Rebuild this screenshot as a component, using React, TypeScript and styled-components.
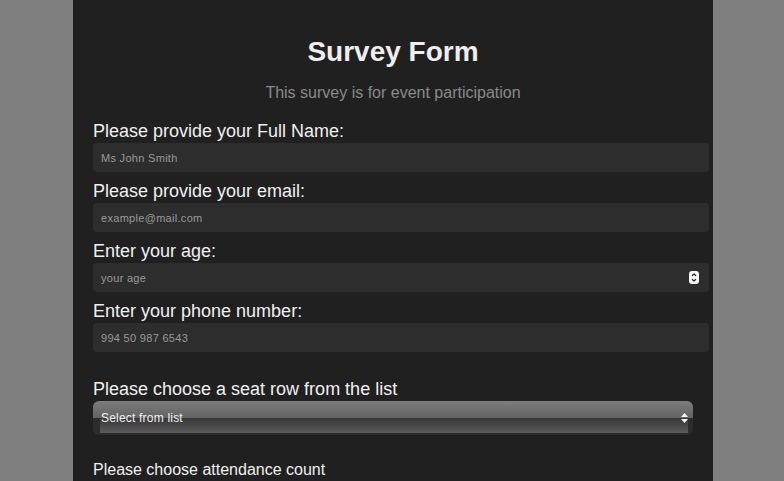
import React from 'react';
import styled, { createGlobalStyle } from 'styled-components';

const GlobalStyle = createGlobalStyle`
  html, body {
    margin: 0;
    padding: 0;
    background: #7f7f7f;
    font-family: 'Liberation Sans', Arial, sans-serif;
  }
`;

const Page = styled.main`
  width: 640px;
  min-height: 100vh;
  margin: 0 calc(50% - 319px);
  padding: 36px 20px 20px;
  box-sizing: border-box;
  background: #202020;
  color: #efefef;
`;

const Header = styled.header`
  text-align: center;
  margin-bottom: 18px;
`;

const Title = styled.h1`
  margin: 0;
  font-size: 28px;
  line-height: 32px;
  font-weight: bold;
  color: #eeeeee;
`;

const Subtitle = styled.p`
  margin: 15px 0 0;
  font-size: 16px;
  line-height: 19px;
  color: #8a8a8a;
`;

const Field = styled.div<{ $gapTop?: number }>`
  margin-top: ${(p) => p.$gapTop || 0}px;
  position: relative;
`;

const Label = styled.label<{ $small?: boolean }>`
  display: block;
  font-size: ${(p) => (p.$small ? 16 : 18)}px;
  line-height: 22px;
  margin-bottom: 1px;
  color: #f0f0f0;
`;

const Input = styled.input`
  display: block;
  width: 100%;
  height: 29px;
  padding: 0 8px;
  margin: 0 0 8px;
  border: none;
  border-radius: 4px;
  background: #2d2d2d;
  color: #ddd;
  font-family: 'Liberation Sans', Arial, sans-serif;
  font-size: 11px;
  letter-spacing: 0.3px;
  outline: none;
  &::placeholder {
    color: #9a9a9a;
  }
  &::-webkit-inner-spin-button,
  &::-webkit-outer-spin-button {
    -webkit-appearance: none;
    margin: 0;
  }
`;

const Spinner = styled.svg`
  position: absolute;
  right: -6px;
  top: 31px;
`;

const SelectWrap = styled.div`
  position: relative;
  width: 600px;
  height: 34px;
`;

const Select = styled.select`
  appearance: none;
  -webkit-appearance: none;
  display: block;
  width: 100%;
  height: 34px;
  padding: 0 8px;
  border: none;
  border-radius: 6px;
  background:
    linear-gradient(to bottom, #7d7d7d, #626262) no-repeat 0 0 / 100% 50%,
    linear-gradient(to bottom, #393939, #454545 45%, #5c5c5c) no-repeat 7px 17px / calc(100% - 12px) 15px,
    #2c2c2c;
  color: #f2f2f2;
  font-family: 'Liberation Sans', Arial, sans-serif;
  font-size: 12px;
  letter-spacing: 0.2px;
  outline: none;
`;

const Arrows = styled.svg`
  position: absolute;
  right: 5px;
  top: 12px;
  pointer-events: none;
`;

export default function App() {
  return (
    <>
      <GlobalStyle />
      <Page>
        <Header>
          <Title>Survey Form</Title>
          <Subtitle>This survey is for event participation</Subtitle>
        </Header>
        <form>
          <Field>
            <Label htmlFor="name">Please provide your Full Name:</Label>
            <Input id="name" type="text" placeholder="Ms John Smith" />
          </Field>
          <Field>
            <Label htmlFor="email">Please provide your email:</Label>
            <Input id="email" type="email" placeholder="example@mail.com" />
          </Field>
          <Field>
            <Label htmlFor="age">Enter your age:</Label>
            <Input id="age" type="number" placeholder="your age" />
            <Spinner width="10" height="13" viewBox="0 0 10 13">
              <rect x="0" y="0" width="10" height="13" rx="3" fill="#f4f4f4" />
              <path d="M3 4.8 L5 3 L7 4.8" stroke="#222" strokeWidth="1.2" fill="none" />
              <path d="M3 8.2 L5 10 L7 8.2" stroke="#222" strokeWidth="1.2" fill="none" />
            </Spinner>
          </Field>
          <Field>
            <Label htmlFor="phone">Enter your phone number:</Label>
            <Input id="phone" type="tel" placeholder="994 50 987 6543" />
          </Field>
          <Field $gapTop={26}>
            <Label htmlFor="seat">Please choose a seat row from the list</Label>
            <SelectWrap>
              <Select id="seat" defaultValue="">
                <option value="" disabled>
                  Select from list
                </option>
                <option value="front">Front</option>
                <option value="middle">Middle</option>
                <option value="back">Back</option>
              </Select>
              <Arrows width="7" height="10" viewBox="0 0 7 10">
                <path d="M3.5 0 L7 4 L0 4 Z" fill="#f2f2f2" />
                <path d="M3.5 10 L7 6 L0 6 Z" fill="#f2f2f2" />
              </Arrows>
            </SelectWrap>
          </Field>
          <Field $gapTop={24}>
            <Label $small>Please choose attendance count</Label>
          </Field>
        </form>
      </Page>
    </>
  );
}
